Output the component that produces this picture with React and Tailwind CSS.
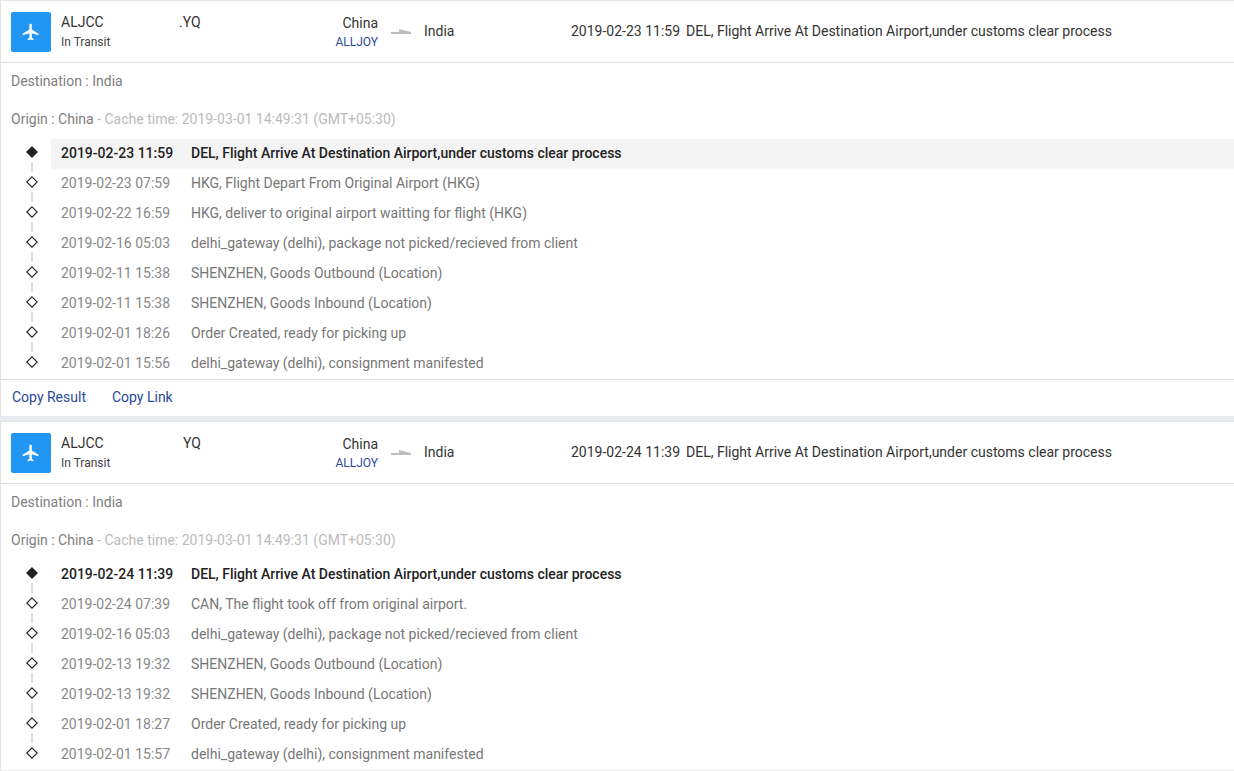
const CARDS = [
  {
    code: '.YQ',
    latestTime: '2019-02-23 11:59',
    events: [
      ['2019-02-23 11:59', 'DEL, Flight Arrive At Destination Airport,under customs clear process'],
      ['2019-02-23 07:59', 'HKG, Flight Depart From Original Airport (HKG)'],
      ['2019-02-22 16:59', 'HKG, deliver to original airport waitting for flight (HKG)'],
      ['2019-02-16 05:03', 'delhi_gateway (delhi), package not picked/recieved from client'],
      ['2019-02-11 15:38', 'SHENZHEN, Goods Outbound (Location)'],
      ['2019-02-11 15:38', 'SHENZHEN, Goods Inbound (Location)'],
      ['2019-02-01 18:26', 'Order Created, ready for picking up'],
      ['2019-02-01 15:56', 'delhi_gateway (delhi), consignment manifested'],
    ],
    highlight: true,
    footer: true,
  },
  {
    code: 'YQ',
    latestTime: '2019-02-24 11:39',
    events: [
      ['2019-02-24 11:39', 'DEL, Flight Arrive At Destination Airport,under customs clear process'],
      ['2019-02-24 07:39', 'CAN, The flight took off from original airport.'],
      ['2019-02-16 05:03', 'delhi_gateway (delhi), package not picked/recieved from client'],
      ['2019-02-13 19:32', 'SHENZHEN, Goods Outbound (Location)'],
      ['2019-02-13 19:32', 'SHENZHEN, Goods Inbound (Location)'],
      ['2019-02-01 18:27', 'Order Created, ready for picking up'],
      ['2019-02-01 15:57', 'delhi_gateway (delhi), consignment manifested'],
    ],
    highlight: false,
    footer: false,
  },
];

function PlaneIcon() {
  return (
    <svg className="w-5 h-5 text-white" viewBox="0 0 24 24" fill="currentColor">
      <path d="M21 16v-2l-8-5V3.5c0-.83-.67-1.5-1.5-1.5S10 2.67 10 3.5V9l-8 5v2l8-2.5V19l-2 1.5V22l3.5-1 3.5 1v-1.5L13 19v-5.5l8 2.5z" />
    </svg>
  );
}

function Diamond({ solid }) {
  return (
    <svg className="w-3 h-3 shrink-0" viewBox="0 0 12 12">
      <path
        d="M6 .8 11.2 6 6 11.2 .8 6Z"
        fill={solid ? '#222' : '#fff'}
        stroke="#222"
        strokeWidth="1.1"
      />
    </svg>
  );
}

function Arrow() {
  return (
    <svg className="w-5 h-[6px] ml-[13px] mr-[13px] mb-[2px] shrink-0" viewBox="0 0 20 6">
      <path d="M0 4h20v2H0Z M8 1 20 4H8Z" fill="#bdbdbd" />
    </svg>
  );
}

function EventRow({ time, text, index, total, highlight }) {
  const first = index === 0;
  return (
    <div className="flex h-[30px] items-stretch">
      <div className="w-[50px] shrink-0 flex flex-col items-center pl-[12px] pt-[7px]">
        <Diamond solid={first} />
        {index < total - 1 && <div className="relative z-10 mt-[4px] h-[10px] w-[2px] shrink-0 bg-[#dddddd]" />}
      </div>
      <div className={`flex-1 flex items-center pl-[10px] pb-[2px] ${first && highlight ? 'bg-[#f4f4f4]' : ''}`}>
        <span className={`w-[130px] ${first ? 'font-medium text-[#222222]' : 'text-[#888888]'}`}>{time}</span>
        <span className={first ? 'font-medium text-[#222222]' : 'text-[#777777]'}>{text}</span>
      </div>
    </div>
  );
}

function TrackCard({ card }) {
  return (
    <div className="bg-white border-l border-l-[#e2e2e2] border-t border-t-[#e3e5ec]">
      {/* cabecera */}
      <div className="h-[62px] pt-[1px] flex items-center pl-[10px] border-b border-[#e0e0e0] text-[#333333]">
        <div className="w-10 h-10 rounded-[2px] bg-[#2196f3] flex items-center justify-center shrink-0">
          <PlaneIcon />
        </div>
        <div className="w-[130px] pl-[10px] flex flex-col shrink-0">
          <span className="leading-[20px] -mt-[1px]">ALJCC</span>
          <span className="text-xs leading-[20px] text-[#444444]">In Transit</span>
        </div>
        <div className={`${card.code === '.YQ' ? 'w-[62px] -ml-[2px]' : 'w-[60px] pl-[2px]'} shrink-0 self-start pt-[10px] leading-[20px]`}>{card.code}</div>
        <div className="w-[137px] flex flex-col items-end shrink-0 pb-[2px]">
          <span className="leading-[20px] pt-[1px]">China</span>
          <span className="text-xs leading-[18px] text-[#2c4a9a]">ALLJOY</span>
        </div>
        <Arrow />
        <span className="w-[147px] shrink-0 pb-[2px]">India</span>
        <span className="w-[115px] shrink-0 pb-[2px]">{card.latestTime}</span>
        <span className="pb-[2px]">DEL, Flight Arrive At Destination Airport,under customs clear process</span>
      </div>
      {/* detalle */}
      <div className="pl-[10px] pt-[8px] leading-[20px] text-[#808080] h-[38px]">Destination : India</div>
      <div className="pl-[10px] pt-[8px] h-[38px] leading-[20px] text-[#808080]">
        Origin : China<span className="text-[#bbbbbb]"> - Cache time: 2019-03-01 14:49:31 (GMT+05:30)</span>
      </div>
      <div>
        {card.events.map(([time, text], i) => (
          <EventRow key={i} time={time} text={text} index={i} total={card.events.length} highlight={card.highlight} />
        ))}
      </div>
      {card.footer && (
        <div className="h-[37px] border-t border-[#e0e0e0] flex items-center pl-[11px] pb-[2px] gap-[26px] text-[#2c4a9a]">
          <span>Copy Result</span>
          <span>Copy Link</span>
        </div>
      )}
    </div>
  );
}

export default function App() {
  return (
    <div className="h-[771px] overflow-hidden bg-[#e8eaf0] flex flex-col gap-[5px] text-sm font-['Roboto',sans-serif]">
      {CARDS.map((card) => (
        <TrackCard key={card.latestTime} card={card} />
      ))}
    </div>
  );
}
